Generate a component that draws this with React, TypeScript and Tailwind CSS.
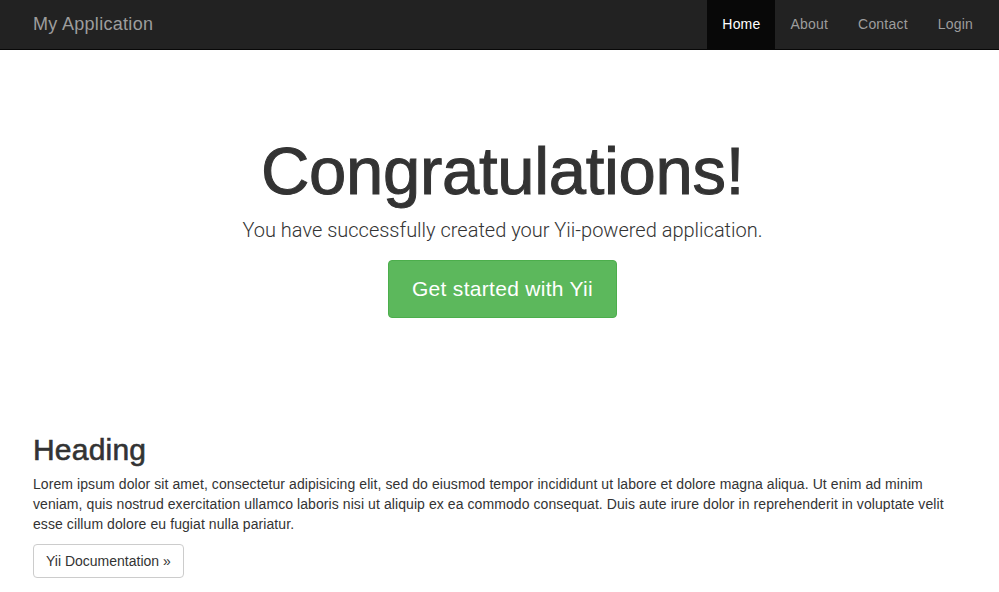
import React from 'react';

const navItems = ['Home', 'About', 'Contact', 'Login'];

export default function App() {
    return (
        <div className="min-h-screen bg-white text-[#333] font-['Liberation_Sans',Arial,sans-serif]">
            {/* Navbar */}
            <nav className="h-[50px] bg-[#222] border-b border-[#080808]">
                <div className="flex items-stretch justify-between h-full pl-[18px] pr-[11px]">
                    <a className="px-[15px] pb-[2px] flex items-center text-[18px] text-[#9d9d9d] leading-5 tracking-[0.3px]">My Application</a>
                    <ul className="flex">
                        {navItems.map((item) => (
                            <li key={item}>
                                <a
                                    className={`h-[49px] px-[15px] pb-[1px] flex items-center text-[14px] leading-5 tracking-[0.2px] ${item === 'Home' ? 'bg-[#080808] text-white' : 'text-[#9d9d9d]'}`}
                                >
                                    {item}
                                </a>
                            </li>
                        ))}
                    </ul>
                </div>
            </nav>

            <div className="w-[939px] ml-[33px]">
                {/* Jumbotron */}
                <div className="text-center pt-[84px] pb-[113px]">
                    <h1 className="text-[67px] leading-[1.1] tracking-[-0.3px] [-webkit-text-stroke:1px_#333]">Congratulations!</h1>
                    <p className="mt-[8px] text-[20px] leading-[1.4] font-light text-[#333] font-['Roboto',sans-serif]">
                        You have successfully created your Yii-powered application.
                    </p>
                    <a className="inline-flex mt-[16px] items-center justify-center w-[229px] h-[58px] rounded-[4px] bg-[#5cb85c] border border-[#4cae4c] text-white text-[21px] tracking-[0.3px]">
                        Get started with Yii
                    </a>
                </div>

                {/* Body */}
                <div>
                    <h2 className="mt-[2px] text-[30px] leading-[1.1] tracking-[0.2px] [-webkit-text-stroke:0.6px_#333]">Heading</h2>
                    <p className="mt-[8px] text-[14px] leading-5 tracking-[0.08px]">
                        Lorem ipsum dolor sit amet, consectetur adipisicing elit, sed do eiusmod tempor incididunt ut labore et dolore magna aliqua. Ut enim ad minim veniam, quis nostrud exercitation ullamco laboris nisi ut aliquip ex ea commodo consequat. Duis aute irure dolor in reprehenderit in voluptate velit esse cillum dolore eu fugiat nulla pariatur.
                    </p>
                    <a className="inline-block mt-[10px] px-[12px] py-[6px] border border-[#ccc] rounded-[4px] text-[14px] leading-5 text-[#333]">
                        Yii Documentation &raquo;
                    </a>
                </div>
            </div>
        </div>
    );
}
